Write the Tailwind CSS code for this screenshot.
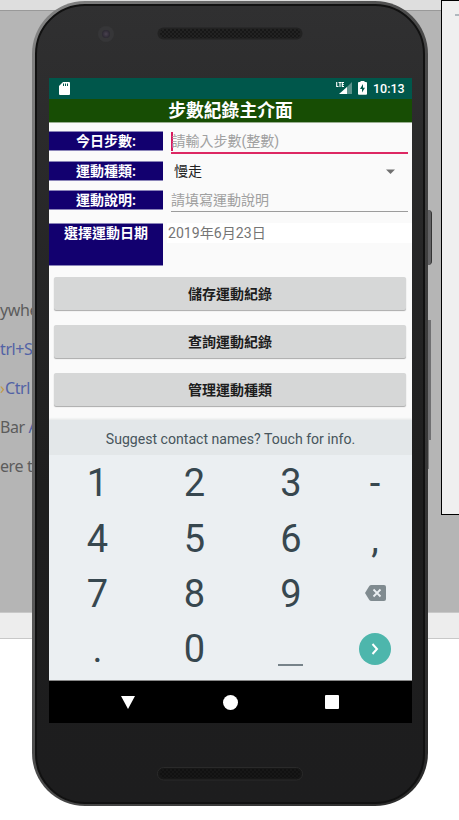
<!DOCTYPE html>
<html lang="zh-Hant">
<head>
<meta charset="utf-8">
<title>步數紀錄主介面</title>
<script src="https://cdn.jsdelivr.net/npm/@tailwindcss/browser@4"></script>
</head>
<body class="relative h-[820px] w-[459px] overflow-hidden bg-white font-['Roboto','Noto_Sans_CJK_TC',sans-serif]">
  <!-- editor behind the phone -->
  <div class="flex h-full flex-col">
    <div class="h-[11px] shrink-0 border-b border-[#999] bg-[#dedede]"></div>
    <div class="h-[601px] shrink-0 bg-[#b5b5b5] pt-[280px] font-['Noto_Sans','Open_Sans',sans-serif] text-[16px] leading-[39px] tracking-[-0.4px] text-[#5c5c5c]">
      <div class="flex h-[39px] w-[100px] whitespace-pre">ywhere</div>
      <div class="flex h-[39px] w-[100px] whitespace-pre text-[#5262a5]">trl+Shift</div>
      <div class="flex h-[39px] w-[100px] whitespace-pre text-[#5262a5]"><span class="block w-[5px] text-[#c29a45]">›</span>Ctrl</div>
      <div class="flex h-[39px] w-[100px] whitespace-pre">Bar <span class="text-[#5262a5]">Alt</span></div>
      <div class="flex h-[39px] w-[100px] whitespace-pre">ere to</div>
    </div>
    <div class="h-[27px] shrink-0 border-y border-[#c8c8c8] bg-[#ededed]"></div>
  </div>

  <!-- emulator toolbar window -->
  <div class="absolute left-[441px] top-0 h-[515px] w-[30px] border border-black bg-[#efefef] pl-[13px] pt-[13px]"><div class="h-[2px] bg-[#b0b8be]"></div></div>

  <!-- side buttons -->
  <div class="absolute left-[427px] top-[210px] h-[55px] w-[5px] rounded-r-sm border-r border-[#333] bg-[#636365]"></div>
  <div class="absolute left-[427px] top-[320px] h-[120px] w-[4px] bg-[#707072]"></div>
  <div class="absolute left-[427px] top-[440px] h-[29px] w-[2px] bg-[#777]"></div>

  <!-- phone -->
  <div class="absolute left-[32px] top-[1px] h-[805px] w-[396px] rounded-[53px] bg-linear-to-br from-[#858585] via-[#4a4a4a] to-[#2a2a2a] p-[3px] pb-[2px]">
    <div class="flex h-full flex-col rounded-[50px] border-2 border-[#111] bg-linear-to-b from-[#303031] via-[#1e1e1e] via-60% to-[#1d1d1e] px-[12px]">
      <div class="flex h-[72px] shrink-0 pt-[21px]">
        <div class="ml-[49px] mt-[-1px] flex size-[16px] items-center justify-center rounded-full bg-[#363638]"><div class="size-[8px] rounded-full bg-radial from-[#4a4250] to-[#1f1e26]"></div></div>
        <svg class="ml-[43px]" width="146" height="14" viewBox="0 0 146 14"><defs><pattern id="holes" width="4" height="4" patternUnits="userSpaceOnUse"><circle cx="2" cy="1" r=".8" fill="#080808"/><circle cx="0" cy="3" r=".8" fill="#080808"/><circle cx="4" cy="3" r=".8" fill="#080808"/></pattern></defs><rect x=".5" y=".5" width="145" height="12" rx="6" fill="#222"/><rect x="3" y="2" width="140" height="9" rx="4" fill="url(#holes)"/></svg>
      </div>

      <div class="flex h-[645px] w-[363px] shrink-0 flex-col bg-[#fafafa]">
        <!-- status bar -->
        <div class="flex h-[21px] shrink-0 items-center bg-[#00574b] pl-[10px] pr-[7px] text-white">
          <svg width="11" height="13" viewBox="0 0 11 13"><path d="M4 0h6q1 0 1 1v11q0 1-1 1H1q-1 0-1-1V4z" fill="#fff"/><path d="M4.500 1.500v2.500M6.500 1.500v2.500M8.500 1.500v2.500" stroke="#00574b" stroke-width="1"/></svg>
          <svg class="-mt-px ml-auto" width="16" height="14" viewBox="0 0 16 14"><path d="M16 1v12H4z" fill="#5b928b"/><path d="M11 6v7H3z" fill="#fff"/><path d="M0 0h8v7H0z" fill="#00574b"/><path d="M.7 1v4.500h1.800M2.500 1.500h3M4 1.500v4.500M8 1.500H6.300v4H8M6.300 3.500h1.500" fill="none" stroke="#fff" stroke-width="1.100"/></svg>
          <svg class="-mt-px ml-[6px]" width="9" height="14" viewBox="0 0 9 14"><path d="M2.500 1V0h4v1H8q1 0 1 1v11q0 .8-1 .8H1q-1 0-1-.8V2q0-1 1-1z" fill="#fff"/><path d="M5 3 2 8h2v3.500L7 6.700H5z" fill="#00574b"/></svg>
          <span class="ml-[6px] w-[32px] whitespace-nowrap pt-px text-[12.5px] font-medium leading-none">10:13</span>
        </div>
        <div class="flex h-[23px] shrink-0 items-center justify-center bg-[#174d04] pt-px text-[17.8px] font-bold leading-none text-white shadow-[0_1px_0_#9aaf92]">步數紀錄主介面</div>

        <!-- form -->
        <div class="flex h-[298px] shrink-0 flex-col pt-[9px] text-[14px]">
          <div class="flex h-[30px] shrink-0">
            <div class="flex h-[20px] w-[114px] items-center justify-center border-y border-[#8a84b8] bg-[#12006f] font-bold text-white">今日步數:</div>
            <div class="ml-[8px] flex h-[23px] w-[237px] items-center border-b-2 border-[#dd2863] text-[#a0a0a0]"><i class="-mr-px h-[19px] w-[1.5px] shrink-0 bg-[#d81b60]"></i>請輸入步數(整數)</div>
          </div>
          <div class="flex h-[29px] shrink-0">
            <div class="flex h-[20px] w-[114px] items-center justify-center border-y border-[#8a84b8] bg-[#12006f] font-bold text-white">運動種類:</div>
            <div class="ml-[12px] flex h-[20px] w-[220px] items-center justify-between text-[#222]"><span class="-ml-px">慢走</span><svg width="9" height="5" viewBox="0 0 9 5"><path d="M0 .5h9L4.500 5z" fill="#707070"/></svg></div>
          </div>
          <div class="flex h-[33px] shrink-0">
            <div class="flex h-[20px] w-[114px] items-center justify-center border-y border-[#8a84b8] bg-[#12006f] font-bold text-white">運動說明:</div>
            <div class="ml-[8px] flex h-[22px] w-[237px] items-center border-b border-[#9c9c9c] text-[#a0a0a0]">請填寫運動說明</div>
          </div>
          <div class="flex h-[54px] shrink-0">
            <div class="flex h-[43px] w-[114px] items-start justify-center border-y border-[#8a84b8] bg-[#12006f] font-bold leading-[19px] text-white">選擇運動日期</div>
            <div class="ml-[4px] flex h-[20px] flex-1 items-center bg-white pl-[1px] pt-[2px] text-[14.1px] text-[#757575]">2019年6月23日</div>
          </div>
          <div class="ml-[5px] flex w-[352px] flex-col gap-[15px] font-bold text-[#1d1d1d]">
            <div class="flex h-[33px] items-center justify-center rounded-[2px] bg-[#d6d7d7] pt-[2px] shadow-[0_1px_1px_#aaa]">儲存運動紀錄</div>
            <div class="flex h-[33px] items-center justify-center rounded-[2px] bg-[#d6d7d7] pt-[2px] shadow-[0_1px_1px_#aaa]">查詢運動紀錄</div>
            <div class="flex h-[33px] items-center justify-center rounded-[2px] bg-[#d6d7d7] pt-[2px] shadow-[0_1px_1px_#aaa]">管理運動種類</div>
          </div>
        </div>

        <!-- keyboard -->
        <div class="flex h-[35px] shrink-0 items-center justify-center bg-[#e3e7e9] pt-[4px] text-[14.1px] text-[#47555c] [clip-path:inset(-4px_0_0_0)] shadow-[0_-1px_2px_#e4e6e7]">Suggest contact names? Touch for info.</div>
        <div class="grid h-[226px] shrink-0 grid-cols-[97px_97px_96px_72px] grid-rows-[56px_55px_56px_54px] items-center justify-items-center border-b border-[#888] bg-[#ebeff2] text-[38px] leading-none text-[#37474f]">
          <div>1</div><div>2</div><div>3</div><div>-</div>
          <div>4</div><div>5</div><div>6</div><div>,</div>
          <div>7</div><div>8</div><div>9</div>
          <svg class="-mt-[2px]" width="21" height="16" viewBox="0 0 21 16"><path d="M6.500 0H19q2 0 2 2v12q0 2-2 2H6.500Q5 16 4.300 15L0 8l4.300-7Q5 0 6.500 0z" fill="#808b90"/><path d="M8.500 4.500l7 7M15.500 4.500l-7 7" stroke="#ebeff2" stroke-width="1.800"/></svg>
          <div class="-mt-px">.</div><div class="-mt-px">0</div><div class="-ml-px mt-[31px] h-[2px] w-[25px] bg-[#77838a]"></div>
          <div class="-mt-px flex size-[32px] items-center justify-center rounded-full bg-[#4db6ac]"><svg width="8" height="12" viewBox="0 0 8 12"><path d="M1.500 1l4.500 5-4.500 5" fill="none" stroke="#fff" stroke-width="2"/></svg></div>
        </div>

        <!-- navigation bar -->
        <div class="flex h-[42px] shrink-0 items-center bg-black">
          <svg class="ml-[72px]" width="14" height="13" viewBox="0 0 14 13"><path d="M0 0h14L7 13z" fill="#fff"/></svg>
          <div class="ml-[88px] size-[15px] rounded-full bg-white"></div>
          <div class="ml-[87px] size-[14px] rounded-[1px] bg-white"></div>
        </div>
      </div>

      <svg class="ml-[108px] mt-[44px] shrink-0" width="146" height="14" viewBox="0 0 146 14"><rect x=".5" y=".5" width="145" height="12.500" rx="6" fill="#171717" stroke="#2a2a2a"/><rect x="3" y="2" width="140" height="9" rx="4" fill="url(#holes)"/></svg>
    </div>
  </div>
</body>
</html>
